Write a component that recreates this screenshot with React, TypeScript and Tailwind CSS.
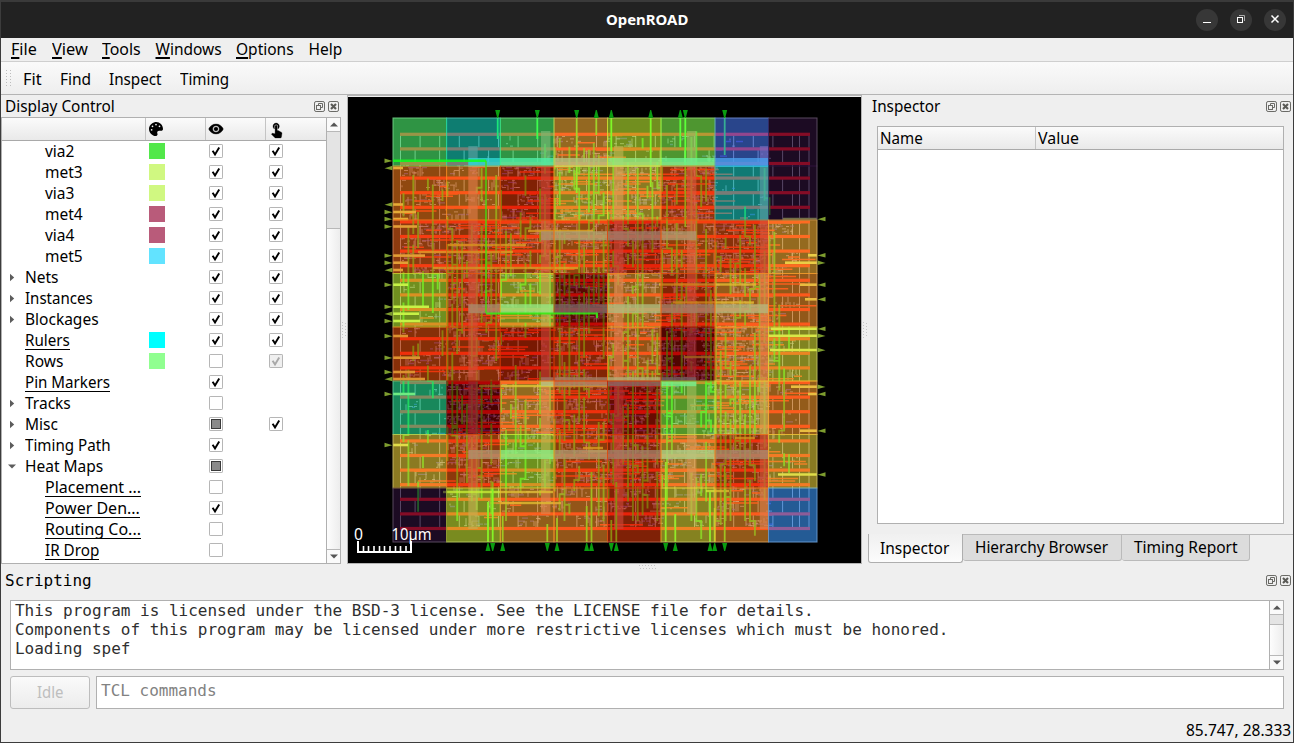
import { useLayoutEffect, useRef, useState } from "react";
import type { ReactNode } from "react";

/* ---------- text condensed or widened to a fixed width ---------- */
function Fit({ w, text, className = "", children }: { w: number; text: string; className?: string; children?: ReactNode }) {
  const ref = useRef<HTMLSpanElement>(null);
  const [scale, setScale] = useState(1);
  useLayoutEffect(() => {
    if (ref.current) setScale(w / ref.current.offsetWidth);
  }, [w, text]);
  return (
    <span className={`block shrink-0 whitespace-nowrap ${className}`} style={{ width: w }}>
      <span ref={ref} className="inline-block origin-left" style={{ transform: `scaleX(${scale})` }}>
        {children ?? text}
      </span>
    </span>
  );
}

/* ---------- small pieces ---------- */
function DockButtons() {
  return (
    <div className="flex gap-[3px]">
      <svg width="11" height="11" viewBox="0 0 11 11" fill="none" stroke="#6a6a66">
        <rect x="0.5" y="0.5" width="10" height="10" rx="1.6" />
        <path d="M4.5 4V2.5h4v4H7" />
        <rect x="2.5" y="4.5" width="4" height="4" />
      </svg>
      <svg width="11" height="11" viewBox="0 0 11 11" fill="none" stroke="#6a6a66">
        <rect x="0.5" y="0.5" width="10" height="10" rx="1.6" />
        <path d="M3 3l5 5M8 3l-5 5" strokeWidth="2.1" stroke="#5a5a56" />
      </svg>
    </div>
  );
}

type Check = "on" | "off" | "part" | "dim" | null;

function Box({ state }: { state: Check }) {
  if (!state) return <div className="w-[60px]" />;
  return (
    <div className="w-[60px] pl-[3px] pt-[3px]">
      <svg width="14" height="14" viewBox="0 0 14 14">
        <rect x="0.5" y="0.5" width="13" height="13" rx="0.6" fill={state === "dim" ? "#efefef" : "#fff"} stroke="#b6b6b6" />
        {(state === "on" || state === "dim") && (
          <path d="M3.6 6.8 L6 10.4 L10.2 3.4" fill="none" stroke={state === "dim" ? "#a8a8a8" : "#000"} strokeWidth="1.9" />
        )}
        {state === "part" && <rect x="2.5" y="2.5" width="9" height="9" fill="#8a8a8a" stroke="#3a3a3a" />}
      </svg>
    </div>
  );
}

type Row = { label: string; w: number; depth: 0 | 1; arrow?: "r" | "d"; line?: boolean; color?: string; a: Check; b: Check };

const rows: Row[] = [
  { label: "via2", w: 29, depth: 1, color: "#52e84a", a: "on", b: "on" },
  { label: "met3", w: 38, depth: 1, color: "#d0f881", a: "on", b: "on" },
  { label: "via3", w: 29, depth: 1, color: "#d0f881", a: "on", b: "on" },
  { label: "met4", w: 38, depth: 1, color: "#b95b7a", a: "on", b: "on" },
  { label: "via4", w: 29, depth: 1, color: "#b95b7a", a: "on", b: "on" },
  { label: "met5", w: 38, depth: 1, color: "#62e3ff", a: "on", b: "on" },
  { label: "Nets", w: 34, depth: 0, arrow: "r", a: "on", b: "on" },
  { label: "Instances", w: 68, depth: 0, arrow: "r", a: "on", b: "on" },
  { label: "Blockages", w: 74, depth: 0, arrow: "r", a: "on", b: "on" },
  { label: "Rulers", w: 45, depth: 0, line: true, color: "#00ffff", a: "on", b: "on" },
  { label: "Rows", w: 38, depth: 0, color: "#90ff90", a: "off", b: "dim" },
  { label: "Pin Markers", w: 85, depth: 0, line: true, a: "on", b: null },
  { label: "Tracks", w: 46, depth: 0, arrow: "r", a: "off", b: null },
  { label: "Misc", w: 33, depth: 0, arrow: "r", a: "part", b: "on" },
  { label: "Timing Path", w: 86, depth: 0, arrow: "r", a: "on", b: null },
  { label: "Heat Maps", w: 78, depth: 0, arrow: "d", a: "part", b: null },
  { label: "Placement ...", w: 96, depth: 1, line: true, a: "off", b: null },
  { label: "Power Den...", w: 95, depth: 1, line: true, a: "on", b: null },
  { label: "Routing Co...", w: 96, depth: 1, line: true, a: "off", b: null },
  { label: "IR Drop", w: 54, depth: 1, line: true, a: "off", b: null },
];

function TreeRow({ r }: { r: Row }) {
  return (
    <div className="flex h-[21px]">
      <div className={`flex w-[147px] ${r.depth ? "pl-[43px]" : "pl-[23px]"}`}>
        {r.arrow && (
          <svg className="-ml-[17px] mr-[9px] mt-[6px] shrink-0" width="8" height="9" viewBox="0 0 8 9" fill="#5c5c5c">
            {r.arrow === "r" ? <path d="M2 0.8 6.2 4.5 2 8.2z" /> : <path d="M0 2.6h8L4 6.6z" />}
          </svg>
        )}
        <div className="h-[20px]">
          <Fit w={r.w} text={r.label} className={`h-[20px] leading-[20px] ${r.line ? "border-b border-black" : ""}`} />
        </div>
      </div>
      <div className="w-[57px] pt-[2px]">{r.color && <div className="size-4" style={{ backgroundColor: r.color }} />}</div>
      <Box state={r.a} />
      <Box state={r.b} />
    </div>
  );
}

function Arrow({ up }: { up?: boolean }) {
  return (
    <svg width="8" height="5" viewBox="0 0 8 5" fill="#555">
      {up ? <path d="M0 4.5h8L4 0.5z" /> : <path d="M0 0.5h8L4 4.5z" />}
    </svg>
  );
}

/* ---------- chip layout with power density map ---------- */
const colX = [45, 98.6, 152.3, 206, 259.5, 313, 367, 420.5, 469];
const rowY = [21, 69, 123, 176.5, 230, 284, 337.5, 391, 445];
const P = "#30123b";
const heat = [
  ["#50fb74", "#18d5c0", "#50fb74", "#fbb038", "#c1f334", "#84ff51", "#4675ed", P],
  ["#f47b1a", "#fa9024", "#d93806", "#e1dd37", "#eed03a", "#ee5a12", "#1bd0c5", P],
  ["#f0641a", "#e8590f", "#ec6415", "#f3781a", "#d8380a", "#f06a14", "#e8540f", "#fbb535"],
  ["#bff334", "#e85010", "#c8ef34", "#950d01", "#f3a530", "#dc3f08", "#fb9a2c", "#f8952a"],
  ["#e5500e", "#e04a0c", "#cc2b04", "#dd4008", "#f98e25", "#8a0801", "#f9a02c", "#dbe136"],
  ["#28e79a", "#7a0403", "#f9b534", "#e85010", "#b01501", "#8eff45", "#e9d53a", "#fa9a2c"],
  ["#edd03a", "#ee6012", "#b9f635", "#ee6513", "#dc3e08", "#f2c53a", "#e8500f", "#e9d03a"],
  [P, "#cdec34", "#f9a02c", "#fa9028", "#d8380a", "#e2dd37", "#f9982a", "#3e9bfe"],
];
/* share of each tile that is filled with placed cells and wires */
const fill = [
  [0, 0.04, 0.2, 0.6, 0.4, 0.3, 0.15, 0],
  [0.6, 0.45, 0.7, 0.75, 0.7, 0.85, 0.15, 0],
  [0.7, 0.9, 0.85, 0.8, 0.9, 0.8, 0.9, 0.4],
  [0.25, 0.9, 0.5, 0.95, 0.7, 0.9, 0.8, 0.4],
  [0.5, 0.7, 0.5, 0.7, 0.8, 0.9, 0.95, 0.3],
  [0.2, 0.95, 0.7, 0.8, 0.9, 0.5, 0.8, 0.35],
  [0.3, 0.8, 0.5, 0.8, 0.85, 0.75, 0.75, 0.25],
  [0, 0.35, 0.5, 0.5, 0.65, 0.4, 0.6, 0],
];

let seed = 20231;
const rnd = () => {
  seed = (seed * 1103515245 + 12345) % 2147483648;
  return seed / 2147483648;
};
const density = (x: number, y: number) => {
  const c = colX.findIndex((v, i) => x >= v && x < (colX[i + 1] ?? 0));
  const r = rowY.findIndex((v, i) => y >= v && y < (rowY[i + 1] ?? 0));
  return c < 0 || r < 0 ? 0 : fill[r][c];
};

function buildLayout() {
  let taps = "";
  let cells = "";
  let blue = "";
  let m1 = "";
  let m2 = "";
  for (let k = 0; k < 27; k++) {
    const y = 36.5 + k * 14.6;
    for (let x = 52.5 + (k % 2) * 14.6; x < 445; x += k % 2 ? 24.5 : 19.6) {
      taps += `M${x.toFixed(1)} ${(y + 2).toFixed(1)}v12`;
    }
    taps += `M52.5 ${(y + 2).toFixed(1)}v12M451.5 ${(y + 2).toFixed(1)}v12M461 ${(y + 2).toFixed(1)}v12`;
    for (let x = 54; x < 450; x += 2) {
      const d = density(x, y + 6);
      const zone = 0.5 + 0.5 * Math.sin(x * 0.11 + k * 2.3);
      if (zone > d + 0.05) continue;
      const top = y + 2;
      if (rnd() < d * 0.9) cells += `M${x} ${(top + Math.floor(rnd() * 3) * 3).toFixed(1)}v${2 + Math.floor(rnd() * 3) * 3}`;
      if (rnd() < d * 0.8) cells += `M${x} ${(top + 1 + Math.floor(rnd() * 5) * 2.4).toFixed(1)}h${2 + Math.floor(rnd() * 4)}`;
      if (rnd() < d * 0.8) blue += `M${x} ${(top + Math.floor(rnd() * 4) * 3).toFixed(1)}h${3 + Math.floor(rnd() * 5)}`;
      if (rnd() < d * 0.15) {
        const len = 6 + rnd() * 38;
        const limit = density(x + len, y + 6) > 0 ? len : Math.min(len, 8);
        m1 += `M${x} ${(top + Math.floor(rnd() * 5) * 2.4).toFixed(1)}h${limit.toFixed(1)}`;
      }
    }
  }
  for (let i = 0; i < 800; i++) {
    const x = 55.5 + Math.floor(rnd() * 80) * 4.88;
    const y = 34 + rnd() * 360;
    const d = density(x, y);
    if (rnd() > d * 0.8) continue;
    const len = 10 + rnd() * rnd() * 110;
    m2 += `M${x.toFixed(1)} ${y.toFixed(1)}v${Math.min(len, 424 - y, d < 0.3 ? 30 : 200).toFixed(1)}`;
    if (rnd() < 0.25) m2 += `h${rnd() < 0.5 ? 4.9 : -4.9}v${(4 + rnd() * 14).toFixed(1)}`;
  }
  return { taps, cells, blue, m1, m2 };
}
const art = buildLayout();

const rails = Array.from({ length: 28 }, (_, k) => 37.3 + k * 14.6);
const leftPins: [number, 1 | -1, number][] = [
  [63.7, 1, 0], [71, -1, 10], [107.5, -1, 10], [115, 1, 23], [122, 1, 15], [129.5, 1, 24], [158.6, 1, 32], [165.7, 1, 15],
  [173, -1, 10], [187.7, 1, 15], [209.7, 1, 36], [216.7, -1, 26], [224, 1, 27], [239, 1, 15], [260.7, 1, 27], [275, 1, 22],
  [282, -1, 32], [297, 1, 22], [348, 1, 15],
];
const rightPins: [number, 1 | -1, number][] = [
  [122, -1, 34], [158.3, -1, 9], [165.7, 1, 32], [187.7, -1, 17], [202.3, -1, 12], [231.7, -1, 46], [238.7, 1, 49],
  [253, 1, 47], [289.7, 1, 26], [297, -1, 9], [333.7, -1, 17], [377.5, -1, 39],
];
const topPins: [number, 1 | -1, number][] = [
  [149.7, 1, 22], [189.3, 1, 22], [228.7, 1, 76], [248.3, -1, 18], [263.3, -1, 34], [302.7, -1, 70], [332.3, -1, 30],
  [337.3, 1, 110], [376.7, 1, 38],
];
const bottomPins: [number, 1 | -1, number][] = [
  [140, -1, 40], [144.7, 1, 60], [154.7, -1, 26], [199.3, 1, 18], [209, -1, 24], [238.7, -1, 36], [243.5, -1, 70],
  [263.3, 1, 22], [268.3, -1, 60], [317.7, 1, 80], [327.3, -1, 28], [362, -1, 50], [366.7, -1, 34], [376.7, 1, 76],
];
const m4: [number, number, number][] = [[120.3, 49, 432], [193, 34, 417], [266, 49, 432], [339, 34, 417], [411.8, 49, 432]];
const m5: [number, number, number][] = [[61, 120.3, 420.5], [134.2, 193, 348.3], [207.2, 120.3, 420.5], [280.2, 193, 348.3], [353, 120.3, 420.5]];
const m3: [number, number, number][] = [
  [171, 85, 230], [148, 100, 178], [155, 70, 165], [187.5, 311, 408], [205.5, 325, 406], [260, 336, 366], [341, 387, 407],
  [395, 95, 205], [406, 153, 213], [351, 235, 255], [394, 358, 381], [289, 131, 260], [134, 180, 245], [354, 240, 260],
];

function Layout() {
  return (
    <svg width="513" height="466" viewBox="0 0 513 466" className="block bg-black">
      <path d={art.taps} stroke="#8f8fa0" strokeWidth="1" />
      <path d={art.blue} stroke="#4a3cff" strokeWidth="1.3" fill="none" opacity="0.6" />
      <path d={art.cells} stroke="#a8a0c8" strokeWidth="1" fill="none" opacity="0.75" />
      <path d={art.m1} stroke="#ff1408" strokeWidth="1.5" fill="none" opacity="0.95" />
      {rails.map((y) => (
        <rect key={y} x="52" y={y - 1.6} width="410" height="3.2" fill="#ff0408" />
      ))}
      <path d={art.m2} stroke="#14e810" strokeWidth="1.9" fill="none" opacity="0.8" />
      {m4.map(([x, a, b]) => (
        <rect key={x} x={x} y={a} width="9.4" height={b - a} fill="#b95b7a" opacity="0.65" />
      ))}
      {m3.map(([y, a, b]) => (
        <rect key={`${y}-${a}`} x={a} y={y - 1.2} width={b - a} height="2.4" fill="#c0e838" opacity="0.8" />
      ))}
      {topPins.map(([x, , n]) => (
        <path key={x} d={`M${x} 20v${n}`} stroke="#20ff18" strokeWidth="1.8" />
      ))}
      {bottomPins.map(([x, , n]) => (
        <path key={x} d={`M${x} 445v${-n}`} stroke="#20ff18" strokeWidth="1.8" />
      ))}
      {leftPins.map(([y, , n]) => (
        <path key={y} d={`M45 ${y}h${n}`} stroke="#d0f060" strokeWidth="2.6" />
      ))}
      {rightPins.map(([y, , n]) => (
        <path key={y} d={`M469 ${y}h${-n}`} stroke="#d0f060" strokeWidth="2.6" />
      ))}
      {m5.map(([y, a, b]) => (
        <rect key={y} x={a} y={y} width={b - a} height="9" fill="#50dcf0" opacity="0.8" />
      ))}
      {heat.map((line, r) =>
        line.map((c, i) => (
          <rect key={`${r}-${i}`} x={colX[i]} y={rowY[r]} width={colX[i + 1] - colX[i]} height={rowY[r + 1] - rowY[r]} fill={c} fillOpacity="0.59" />
        )),
      )}
      {heat.map((line, r) =>
        line.map((c, i) => (
          <rect key={`${r}-${i}`} x={colX[i]} y={rowY[r]} width={colX[i + 1] - colX[i]} height={rowY[r + 1] - rowY[r]} fill="none" stroke={c} strokeOpacity="0.65" />
        )),
      )}
      <rect x="45" y="21" width="424" height="424" fill="none" stroke="#a0a0a0" strokeOpacity="0.4" />
      <path d="M45 63.7H138" fill="none" stroke="#12ff1c" strokeWidth="2.6" opacity="0.85" />
      <path d="M138 63.7V216" fill="none" stroke="#40e010" strokeWidth="1.8" opacity="0.75" />
      <path d="M138 216.500H249V221" fill="none" stroke="#30f012" strokeWidth="2" opacity="0.85" />
      <g fill="#0a9c10">
        {topPins.map(([x, d]) => (
          <path key={x} d={d > 0 ? `M${x - 2.5} 13h5l-2 8h-1z` : `M${x - 2.5} 21h5l-2 -8h-1z`} />
        ))}
        {bottomPins.map(([x, d]) => (
          <path key={x} d={d > 0 ? `M${x - 2.5} 446h5l-2 8h-1z` : `M${x - 2.5} 454h5l-2 -8h-1z`} />
        ))}
      </g>
      <g fill="#7d9c2e">
        {leftPins.map(([y, d]) => (
          <path key={y} d={d > 0 ? `M36.5 ${y - 2.2}v4.4l8 -2z` : `M44.5 ${y - 2.2}v4.4l-8 -2z`} />
        ))}
        {rightPins.map(([y, d]) => (
          <path key={y} d={d > 0 ? `M469.5 ${y - 2.2}v4.4l8 -2z` : `M477.5 ${y - 2.2}v4.4l-8 -2z`} />
        ))}
      </g>
      <path d="M10 444v11h53v-11" fill="none" stroke="#fff" strokeWidth="2" />
      <path d="M15.5 449v6M20.5 449v6M26 449v6M31.5 449v6M36.5 449v6M42 449v6M47.5 449v6M52.5 449v6M58 449v6" stroke="#fff" strokeWidth="1.6" />
      <text x="6" y="443" fill="#fff" fontSize="15.5" textLength="9" lengthAdjust="spacingAndGlyphs" fontFamily="'Noto Sans', sans-serif">0</text>
      <text x="43.500" y="443" fill="#fff" fontSize="15.5" textLength="40" lengthAdjust="spacingAndGlyphs" fontFamily="'Noto Sans', sans-serif">10µm</text>
    </svg>
  );
}

/* ---------- window ---------- */
const menus: [string, number][] = [["File", 26], ["View", 36], ["Tools", 39], ["Windows", 66], ["Options", 58], ["Help", 34]];
const tools: [string, number][] = [["Fit", 19], ["Find", 31], ["Inspect", 53], ["Timing", 49]];

export default function App() {
  return (
    <div className="flex h-[743px] w-[1294px] flex-col overflow-hidden border border-t-0 border-[#3c3c3c] bg-[#efefef] font-['Noto_Sans'] text-[15.5px] leading-5 text-black">
      <header className="flex h-[38px] shrink-0 items-center border-t-2 border-[#3a3a3a] bg-[#222222] pr-[7px]">
        <div className="w-[605px]" />
        <Fit w={82} text="OpenROAD" className="text-[14px] font-bold text-white" />
        <div className="ml-auto flex gap-3">
          <div className="flex size-[22px] items-center justify-center rounded-full bg-[#373737]">
            <svg width="12" height="12" viewBox="0 0 12 12"><path d="M2 8.5h8" stroke="#fff" /></svg>
          </div>
          <div className="flex size-[22px] items-center justify-center rounded-full bg-[#373737]">
            <svg width="12" height="12" viewBox="0 0 12 12" fill="none"><path d="M4 1.5h5.5V7" stroke="#aaa" /><rect x="2.5" y="3.5" width="5" height="5" stroke="#fff" /></svg>
          </div>
          <div className="flex size-[22px] items-center justify-center rounded-full bg-[#373737]">
            <svg width="12" height="12" viewBox="0 0 12 12"><path d="M2.5 1.500l7 7M9.5 1.500l-7 7" stroke="#fff" strokeWidth="1.5" /></svg>
          </div>
        </div>
      </header>

      <nav className="flex h-6 shrink-0 gap-[14.5px] border-b border-[#cfcfcf] pl-[10px] pt-px">
        {menus.map(([m, w]) => (
          <Fit key={m} w={w} text={m}>
            {m === "Help" ? m : <><span className="underline decoration-2 underline-offset-[2px]">{m[0]}</span>{m.slice(1)}</>}
          </Fit>
        ))}
      </nav>

      <div className="flex h-[33px] shrink-0 items-center gap-[18px] border-b border-[#b4b4b4] bg-linear-to-b from-[#fafafa] to-[#eeeeee] pl-[5px]">
        <svg className="-mr-[7px]" width="6" height="17" viewBox="0 0 6 17">
          <path d="M0.5 0v17M4.5 0v17" stroke="#bdbdbd" strokeDasharray="1 2" />
        </svg>
        {tools.map(([t, w]) => (
          <Fit key={t} w={w} text={t} className="mt-px" />
        ))}
      </div>

      <div className="flex h-[469px] shrink-0">
        {/* display control */}
        <section className="w-[340px] shrink-0">
          <div className="flex h-[22px] items-center justify-between pl-1 pr-[2px]">
            <Fit w={110} text="Display Control" />
            <DockButtons />
          </div>
          <div className="flex h-[447px] border border-[#b0b0b0] bg-white">
            <div className="w-[324px]">
              <div className="flex h-[23px] border-b border-[#a9a9a9] bg-linear-to-b from-[#fbfbfb] to-[#e9e9e9]">
                <div className="w-[144px] border-r border-[#c4c4c4]" />
                <div className="w-[60px] border-r border-[#c4c4c4] pl-[3px] pt-[4px]">
                  <svg width="14" height="14" viewBox="0 0 512 512">
                    <path d="M204.3 5C104.900 24.400 24.800 104.300 5.200 203.400c-37 187 131.700 326.400 258.800 306.700 41.200-6.400 61.400-54.600 42.500-91.700-23.100-45.400 9.900-98.400 60.900-98.400h79.700c35.800 0 64.800-29.600 64.900-65.300C511.500 97.100 368.100-26.900 204.300 5zM96 320c-17.700 0-32-14.300-32-32s14.300-32 32-32 32 14.300 32 32-14.300 32-32 32zm32-128c-17.700 0-32-14.300-32-32s14.300-32 32-32 32 14.300 32 32-14.300 32-32 32zm128-64c-17.700 0-32-14.300-32-32s14.300-32 32-32 32 14.300 32 32-14.300 32-32 32zm128 64c-17.700 0-32-14.300-32-32s14.300-32 32-32 32 14.300 32 32-14.300 32-32 32z" />
                  </svg>
                </div>
                <div className="w-[60px] border-r border-[#c4c4c4] pl-[2px] pt-[3px]">
                  <svg width="16" height="16" viewBox="0 0 24 24">
                    <path d="M12 4.500C7 4.500 2.730 7.610 1 12c1.730 4.390 6 7.500 11 7.500s9.270-3.110 11-7.500c-1.730-4.390-6-7.500-11-7.500zM12 17c-2.760 0-5-2.240-5-5s2.240-5 5-5 5 2.240 5 5-2.240 5-5 5zm0-8c-1.660 0-3 1.340-3 3s1.340 3 3 3 3-1.340 3-3-1.340-3-3-3z" stroke="#000" strokeWidth="0.5" />
                  </svg>
                </div>
                <div className="flex-1 pl-[2px] pt-[4px]">
                  <svg width="17" height="17" viewBox="0 0 24 24">
                    <path d="M9 11.240V7.500C9 6.120 10.120 5 11.500 5S14 6.120 14 7.500v3.740c1.210-.81 2-2.180 2-3.740C16 5.010 13.990 3 11.500 3S7 5.010 7 7.500c0 1.560.79 2.930 2 3.740zm9.840 4.630l-4.540-2.260c-.17-.07-.35-.11-.54-.11H13v-6c0-.83-.67-1.500-1.500-1.500S10 6.670 10 7.500v10.740l-3.430-.72c-.08-.01-.15-.03-.24-.03-.31 0-.59.130-.79.330l-.79.800 4.940 4.940c.27.270.65.440 1.060.440h6.790c.75 0 1.330-.55 1.440-1.280l.75-5.270c.01-.07.02-.14.02-.2 0-.62-.38-1.160-.91-1.380z" stroke="#000" strokeWidth="0.4" transform="translate(0 -1.500)" />
                  </svg>
                </div>
              </div>
              {rows.map((r) => (
                <TreeRow key={r.label} r={r} />
              ))}
            </div>
            <div className="flex w-[14px] flex-col border-l border-[#b0b0b0]">
              <div className="flex h-[14px] items-center justify-center border-b border-[#b8b8b8] bg-[#fafafa]"><Arrow up /></div>
              <div className="h-[97px] border-b border-[#b8b8b8] bg-[#e4e4e4]" />
              <div className="flex-1 bg-linear-to-r from-[#fdfdfd] to-[#ededed]" />
              <div className="flex h-[14px] items-center justify-center border-t border-[#b8b8b8] bg-[#fafafa]"><Arrow /></div>
            </div>
          </div>
        </section>

        <div className="flex w-[6px] items-center justify-center">
          <svg width="4" height="16" viewBox="0 0 4 16"><path d="M0.500 0v16M3.500 1v15" stroke="#c6c6c6" strokeDasharray="1 2" /></svg>
        </div>

        <div className="w-[515px] shrink-0 border border-[#b4b4b4] pt-px">
          <Layout />
        </div>

        <div className="flex w-[6px] items-center justify-center">
          <svg width="4" height="16" viewBox="0 0 4 16"><path d="M0.500 0v16M3.500 1v15" stroke="#c6c6c6" strokeDasharray="1 2" /></svg>
        </div>

        {/* inspector */}
        <section className="flex flex-1 flex-col">
          <div className="flex h-[22px] items-center justify-between pl-[4px] pr-[2px]">
            <Fit w={68} text="Inspector" />
            <DockButtons />
          </div>
          <div className="ml-[9px] mr-[9px] mt-[9px] h-[398px] border border-[#b0b0b0] bg-white">
            <div className="flex h-[23px] border-b border-[#a9a9a9] bg-linear-to-b from-[#fbfbfb] to-[#e9e9e9] leading-[23px]">
              <div className="w-[158px] border-r border-[#c4c4c4] pl-[2px]"><Fit w={43} text="Name" /></div>
              <div className="pl-[2px]"><Fit w={41} text="Value" /></div>
            </div>
          </div>
          <div className="mt-[10px] flex items-start">
            <div className="h-[29px] w-[95px] rounded-b-[3px] border border-t-0 border-[#aeaeae] bg-linear-to-b from-[#f0f0f0] to-[#fcfcfc] pl-[11px] pt-[4px]">
              <Fit w={69} text="Inspector" />
            </div>
            <div className="h-[27px] w-[159px] rounded-b-[3px] border border-l-0 border-[#bababa] bg-[#dcdcdc] pl-3 pt-[2px]">
              <Fit w={133} text="Hierarchy Browser" />
            </div>
            <div className="h-[27px] w-[128px] rounded-b-[3px] border border-l-0 border-[#bababa] bg-[#dcdcdc] pl-3 pt-[2px]">
              <Fit w={104} text="Timing Report" />
            </div>
            <div className="flex-1 border-t border-[#bababa]" />
          </div>
        </section>
      </div>

      <div className="flex h-[5px] shrink-0 items-center justify-center">
        <svg width="17" height="4" viewBox="0 0 17 4"><path d="M0 0.500h17M1 3.500h16" stroke="#c6c6c6" strokeDasharray="1 2" /></svg>
      </div>

      {/* scripting */}
      <section className="shrink-0 font-['DejaVu_Sans_Mono'] text-[16px]">
        <div className="flex h-[22px] items-center justify-between pl-1 pr-[2px]">
          <Fit w={87} text="Scripting" className="mt-px" />
          <DockButtons />
        </div>
        <div className="mx-[9px] mt-[9px] flex h-[70px] border border-[#b0b0b0] bg-white">
          <div className="flex-1 pl-1 leading-[19px] tracking-[-0.01px] text-[#2f2f2f]">
            <p>This program is licensed under the BSD-3 license. See the LICENSE file for details.</p>
            <p>Components of this program may be licensed under more restrictive licenses which must be honored.</p>
            <p>Loading spef</p>
          </div>
          <div className="flex w-[14px] flex-col border-l border-[#b0b0b0]">
            <div className="flex h-[14px] items-center justify-center border-b border-[#b8b8b8] bg-[#fafafa]"><Arrow up /></div>
            <div className="h-[10px] border-b border-[#b8b8b8] bg-[#e4e4e4]" />
            <div className="flex-1 bg-linear-to-r from-[#fdfdfd] to-[#ededed]" />
            <div className="flex h-[14px] items-center justify-center border-t border-[#b8b8b8] bg-[#fafafa]"><Arrow /></div>
          </div>
        </div>
        <div className="mx-[9px] mt-[6px] flex gap-[6px]">
          <div className="flex h-[33px] w-[80px] items-center justify-center rounded-[3px] border border-[#bdbdbd] bg-linear-to-b from-[#fafafa] to-[#ececec] pb-[2px] font-['Noto_Sans'] text-[15.5px] text-[#bebebe]">
            <Fit w={27} text="Idle" />
          </div>
          <div className="h-[33px] flex-1 border border-[#b0b0b0] bg-white pl-1 pt-1 text-[#828282]">TCL commands</div>
        </div>
      </section>

      <footer className="flex justify-end pr-[2px] pt-[11px]">
        <Fit w={105} text="85.747, 28.333" />
      </footer>
    </div>
  );
}
